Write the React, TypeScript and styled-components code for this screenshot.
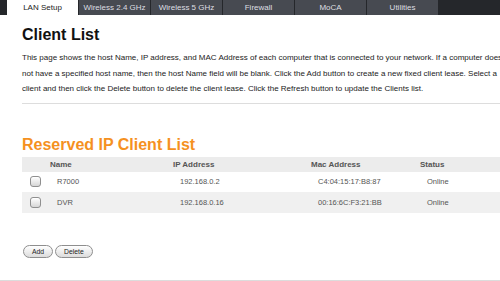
import styled, { createGlobalStyle } from "styled-components";

const GlobalStyle = createGlobalStyle`
  html, body {
    margin: 0;
    padding: 0;
    overflow: hidden;
    background: #fff;
    font-family: "Liberation Sans", Arial, sans-serif;
  }
`;

const Page = styled.div`
  width: 500px;
  height: 281px;
  overflow: hidden;
  border-bottom: 1px solid #dcdcdc;
  box-sizing: border-box;
`;

const TabBar = styled.div`
  display: flex;
  gap: 1px;
  height: 15px;
  padding-left: 7px;
  background: #25272b;
`;

const Tab = styled.div<{ $active?: boolean }>`
  width: 71px;
  display: flex;
  align-items: center;
  justify-content: center;
  font-size: 8px;
  color: ${(p) => (p.$active ? "#222" : "#dedfe2")};
  background: ${(p) => (p.$active ? "#fff" : "#474a51")};
`;

const Content = styled.div`
  width: 560px;
  padding-left: 22px;
`;

const Title = styled.h1`
  margin: 0;
  padding-top: 11px;
  font-size: 16px;
  line-height: 18px;
  font-weight: bold;
  color: #111;
`;

const Intro = styled.p`
  margin: 6px 0 0;
  width: 486px;
  font-size: 8px;
  line-height: 15.5px;
  color: #222;
`;

const Rule = styled.hr`
  margin: 6px 0 0;
  border: none;
  border-top: 1px solid #dddddd;
`;

const SectionTitle = styled.h2`
  margin: 0;
  padding-top: 32px;
  font-size: 16px;
  line-height: 18px;
  font-weight: bold;
  color: #f5911f;
`;

const Table = styled.div`
  margin-top: 3px;
  display: grid;
  grid-template-columns: 28px 123px 138px 109px 1fr;
`;

const HeadRow = styled.div`
  display: contents;
`;

const HeadCell = styled.div`
  height: 15px;
  line-height: 15px;
  background: #ececec;
  font-size: 8px;
  font-weight: bold;
  color: #555;
`;

const Row = styled.div`
  display: contents;
`;

const Cell = styled.div<{ $shade?: boolean; $h: number }>`
  height: ${(p) => p.$h}px;
  display: flex;
  align-items: center;
  padding-left: 7px;
  background: ${(p) => (p.$shade ? "#f0f0f0" : "#fff")};
  font-size: 7.5px;
  color: #555;
`;

const BoxCell = styled(Cell)`
  padding-left: 8px;
`;

const Check = styled.span`
  width: 9px;
  height: 9px;
  border: 1px solid #8f8f8f;
  border-radius: 3px;
  background: linear-gradient(#ffffff, #d6d6d6);
  box-shadow: inset 0 1px 0 #fff;
`;

const Buttons = styled.div`
  display: flex;
  gap: 2px;
  margin-top: 32px;
  padding-left: 1px;
`;

const Button = styled.button`
  height: 13px;
  padding: 0 8px;
  border: 1px solid #8e8e8e;
  border-radius: 7px;
  background: linear-gradient(#ffffff, #dcdcdc);
  font-family: "Liberation Sans", Arial, sans-serif;
  font-size: 6.8px;
  color: #222;
  line-height: 11px;
`;

const tabs = ["LAN Setup", "Wireless 2.4 GHz", "Wireless 5 GHz", "Firewall", "MoCA", "Utilities"];

const clients = [
  { name: "R7000", ip: "192.168.0.2", mac: "C4:04:15:17:B8:87", status: "Online", h: 20 },
  { name: "DVR", ip: "192.168.0.16", mac: "00:16:6C:F3:21:BB", status: "Online", h: 21 },
];

export default function App() {
  return (
    <Page>
      <GlobalStyle />
      <TabBar>
        {tabs.map((t, i) => (
          <Tab key={t} $active={i === 0}>
            {t}
          </Tab>
        ))}
      </TabBar>
      <Content>
        <Title>Client List</Title>
        <Intro>
          This page shows the host Name, IP address, and MAC Address of each computer that is connected to your
          network. If a computer does not have a specified host name, then the host Name field will be blank. Click
          the Add button to create a new fixed client lease. Select a client and then click the Delete button to
          delete the client lease. Click the Refresh button to update the Clients list.
        </Intro>
        <Rule />
        <SectionTitle>Reserved IP Client List</SectionTitle>
        <Table>
          <HeadRow>
            <HeadCell />
            <HeadCell>Name</HeadCell>
            <HeadCell>IP Address</HeadCell>
            <HeadCell>Mac Address</HeadCell>
            <HeadCell>Status</HeadCell>
          </HeadRow>
          {clients.map((c, i) => (
            <Row key={c.name}>
              <BoxCell $h={c.h} $shade={i % 2 === 1}>
                <Check />
              </BoxCell>
              <Cell $h={c.h} $shade={i % 2 === 1}>{c.name}</Cell>
              <Cell $h={c.h} $shade={i % 2 === 1}>{c.ip}</Cell>
              <Cell $h={c.h} $shade={i % 2 === 1}>{c.mac}</Cell>
              <Cell $h={c.h} $shade={i % 2 === 1}>{c.status}</Cell>
            </Row>
          ))}
        </Table>
        <Buttons>
          <Button>Add</Button>
          <Button>Delete</Button>
        </Buttons>
      </Content>
    </Page>
  );
}
